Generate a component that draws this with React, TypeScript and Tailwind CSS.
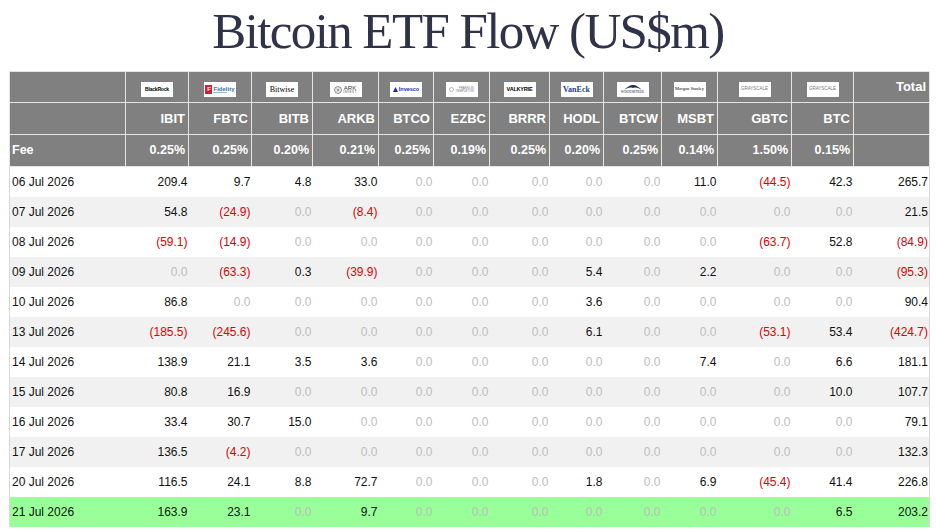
// Bitcoin ETF Flow table

type Cell = number | null;

const cols = [
  { ticker: 'IBIT', fee: '0.25%', w: 63 },
  { ticker: 'FBTC', fee: '0.25%', w: 63 },
  { ticker: 'BITB', fee: '0.20%', w: 61 },
  { ticker: 'ARKB', fee: '0.21%', w: 66 },
  { ticker: 'BTCO', fee: '0.25%', w: 55 },
  { ticker: 'EZBC', fee: '0.19%', w: 56 },
  { ticker: 'BRRR', fee: '0.25%', w: 60 },
  { ticker: 'HODL', fee: '0.20%', w: 54 },
  { ticker: 'BTCW', fee: '0.25%', w: 58 },
  { ticker: 'MSBT', fee: '0.14%', w: 56 },
  { ticker: 'GBTC', fee: '1.50%', w: 74 },
  { ticker: 'BTC', fee: '0.15%', w: 62 },
];

const rows: { date: string; v: Cell[]; total: number }[] = [
  { date: '06 Jul 2026', v: [209.4, 9.7, 4.8, 33.0, 0, 0, 0, 0, 0, 11.0, -44.5, 42.3], total: 265.7 },
  { date: '07 Jul 2026', v: [54.8, -24.9, 0, -8.4, 0, 0, 0, 0, 0, 0, 0, 0], total: 21.5 },
  { date: '08 Jul 2026', v: [-59.1, -14.9, 0, 0, 0, 0, 0, 0, 0, 0, -63.7, 52.8], total: -84.9 },
  { date: '09 Jul 2026', v: [0, -63.3, 0.3, -39.9, 0, 0, 0, 5.4, 0, 2.2, 0, 0], total: -95.3 },
  { date: '10 Jul 2026', v: [86.8, 0, 0, 0, 0, 0, 0, 3.6, 0, 0, 0, 0], total: 90.4 },
  { date: '13 Jul 2026', v: [-185.5, -245.6, 0, 0, 0, 0, 0, 6.1, 0, 0, -53.1, 53.4], total: -424.7 },
  { date: '14 Jul 2026', v: [138.9, 21.1, 3.5, 3.6, 0, 0, 0, 0, 0, 7.4, 0, 6.6], total: 181.1 },
  { date: '15 Jul 2026', v: [80.8, 16.9, 0, 0, 0, 0, 0, 0, 0, 0, 0, 10.0], total: 107.7 },
  { date: '16 Jul 2026', v: [33.4, 30.7, 15.0, 0, 0, 0, 0, 0, 0, 0, 0, 0], total: 79.1 },
  { date: '17 Jul 2026', v: [136.5, -4.2, 0, 0, 0, 0, 0, 0, 0, 0, 0, 0], total: 132.3 },
  { date: '20 Jul 2026', v: [116.5, 24.1, 8.8, 72.7, 0, 0, 0, 1.8, 0, 6.9, -45.4, 41.4], total: 226.8 },
  { date: '21 Jul 2026', v: [163.9, 23.1, 0, 9.7, 0, 0, 0, 0, 0, 0, 0, 6.5], total: 203.2 },
];

function fmt(n: number) {
  const s = Math.abs(n).toFixed(1);
  return n < 0 ? `(${s})` : s;
}

function Num({ n }: { n: Cell }) {
  if (n === null) return null;
  if (n === 0) return <span className="text-[#bdbdbd]">0.0</span>;
  if (n < 0) return <span className="text-[#e00000]">{fmt(n)}</span>;
  return <span className="text-[#111]">{fmt(n)}</span>;
}

// tiny issuer logos
function Box({ children }: { children: React.ReactNode }) {
  return (
    <div className="mx-auto mt-[10px] flex h-[15px] w-[32px] items-center justify-center overflow-hidden bg-white font-normal">
      {children}
    </div>
  );
}

function Logo({ i }: { i: number }) {
  switch (i) {
    case 0:
      return (
        <Box>
          <span className="text-[5px] font-bold tracking-[-0.2px] text-black">BlackRock</span>
        </Box>
      );
    case 1:
      return (
        <Box>
          <span className="mr-[1px] flex h-[9px] w-[7px] items-center justify-center bg-[#d4202c] text-[6px] font-bold text-white">F</span>
          <span className="flex flex-col leading-none">
            <span className="text-[6px] font-bold text-[#3b6fb6]">Fidelity</span>
            <span className="h-[1px] w-[14px] bg-[#9bb8d8]"></span>
          </span>
        </Box>
      );
    case 2:
      return (
        <Box>
          <span className="font-['Liberation_Serif',serif] text-[8px] font-normal text-black">Bitwise</span>
        </Box>
      );
    case 3:
      return (
        <Box>
          <svg width="8" height="8" viewBox="0 0 10 10" className="mr-[1px]">
            <circle cx="5" cy="5" r="4.3" fill="none" stroke="#444" strokeWidth="0.8" />
            <path d="M2 5h6M5 2v6M3 3l4 4M7 3l-4 4" stroke="#666" strokeWidth="0.5" />
          </svg>
          <span className="flex flex-col items-center leading-none">
            <span className="text-[6px] font-normal text-[#333]">ARK</span>
            <span className="text-[3px] tracking-[0.5px] text-[#555]">INVEST</span>
          </span>
        </Box>
      );
    case 4:
      return (
        <Box>
          <svg width="5" height="5" viewBox="0 0 10 10" className="mr-[1px]">
            <path d="M0 10L5 0l5 10z" fill="#1b2ba8" />
          </svg>
          <span className="text-[5.5px] font-bold text-[#1b2ba8]">Invesco</span>
        </Box>
      );
    case 5:
      return (
        <Box>
          <svg width="5" height="5" viewBox="0 0 10 10" className="mr-[1px]">
            <circle cx="5" cy="5" r="4" fill="none" stroke="#777" strokeWidth="1" />
          </svg>
          <span className="flex flex-col leading-[3px]">
            <span className="text-[3px] text-[#777]">FRANKLIN</span>
            <span className="text-[3px] text-[#777]">TEMPLETON</span>
          </span>
        </Box>
      );
    case 6:
      return (
        <Box>
          <span className="text-[5.5px] font-bold tracking-[-0.2px] text-black">VALKYRIE</span>
        </Box>
      );
    case 7:
      return (
        <Box>
          <span className="font-['Liberation_Serif',serif] text-[8px] font-bold text-[#1d3c8f]">VanEck</span>
        </Box>
      );
    case 8:
      return (
        <Box>
          <span className="flex flex-col items-center leading-none">
            <svg width="18" height="7" viewBox="0 0 18 7">
              <path d="M0 6C3 3 6 1 9 1s6 2 9 5C15 4 12 3 9 4 6 3 3 4 0 6z" fill="#1e2a55" />
            </svg>
            <span className="font-['Liberation_Serif',serif] text-[3.5px] text-[#1e2a55]">WISDOMTREE</span>
          </span>
        </Box>
      );
    case 9:
      return (
        <Box>
          <span className="font-['Liberation_Serif',serif] text-[4.5px] text-black">Morgan Stanley</span>
        </Box>
      );
    default:
      return (
        <Box>
          <span className="text-[4.5px] text-[#777]">GRAYSCALE</span>
        </Box>
      );
  }
}

const th = 'border border-[#e4e4e4] bg-[#808080] px-[3px] text-right align-middle font-bold text-white';

export default function App() {
  return (
    <div className="min-h-screen bg-white font-['Liberation_Sans',Arial,sans-serif]">
      <h1 className="h-[71px] pt-[1px] text-center font-['Liberation_Serif','Times_New_Roman',serif] text-[51px] leading-[60px] tracking-[-1.6px] text-[#30324a]">
        Bitcoin ETF Flow (US$m)
      </h1>

      <table className="ml-[9px] w-[920px] table-fixed border-collapse border-x border-[#d8d8d8] text-[12px]">
        <colgroup>
          <col style={{ width: 116 }} />
          {cols.map((c) => (
            <col key={c.ticker} style={{ width: c.w }} />
          ))}
          <col style={{ width: 76 }} />
        </colgroup>
        <thead>
          <tr className="h-[31px]">
            <th className={th}></th>
            {cols.map((c, i) => (
              <th key={c.ticker} className={th + ' !px-0 !align-top'}>
                <Logo i={i} />
              </th>
            ))}
            <th className={th + ' text-[13px]'}>Total</th>
          </tr>
          <tr className="h-[32px] text-[13px]">
            <th className={th}></th>
            {cols.map((c) => (
              <th key={c.ticker} className={th}>
                {c.ticker}
              </th>
            ))}
            <th className={th}></th>
          </tr>
          <tr className="h-[32px] text-[12.5px]">
            <th className={th + ' !text-left !px-[2px]'}>Fee</th>
            {cols.map((c) => (
              <th key={c.ticker} className={th}>
                {c.fee}
              </th>
            ))}
            <th className={th}></th>
          </tr>
        </thead>
        <tbody>
          {rows.map((r, ri) => {
            const last = ri === rows.length - 1;
            const bg = last ? 'bg-[#99ff99]' : ri % 2 === 0 ? 'bg-white' : 'bg-[#f1f1f1]';
            return (
              <tr key={r.date} className={`h-[30px] ${bg}`}>
                <td className="pl-[2px] text-left text-[#111]">{r.date}</td>
                {r.v.map((n, i) => (
                  <td key={i} className="pr-[1px] text-right">
                    <Num n={n} />
                  </td>
                ))}
                <td className="pr-[1px] text-right">
                  <Num n={r.total} />
                </td>
              </tr>
            );
          })}
        </tbody>
      </table>
    </div>
  );
}
